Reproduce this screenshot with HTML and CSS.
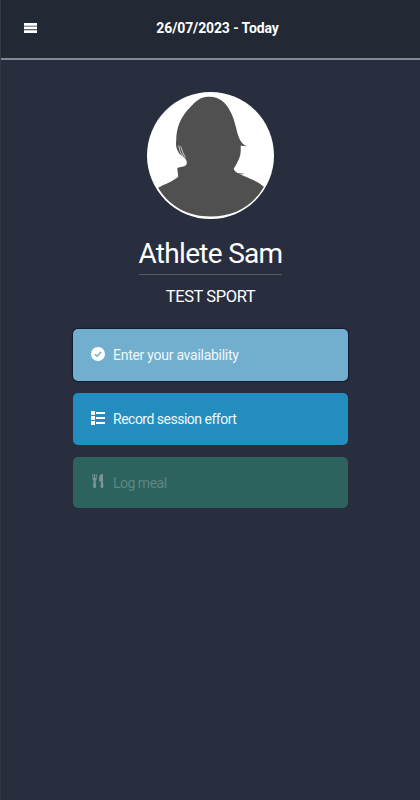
FILE: index.html
```html
<!DOCTYPE html>
<html lang="en">
<head>
  <meta charset="utf-8">
  <meta name="viewport" content="width=device-width, initial-scale=1">
  <title>Athlete Home</title>
  <link rel="stylesheet" href="styles.css">
</head>
<body>
  <header class="top-bar">
    <button class="menu-btn" aria-label="Menu">
      <svg viewBox="0 0 13 10">
        <path d="M0 0H13V2.700H0ZM0 3.500H13V6.300H0ZM0 7.200H13V10H0Z"/>
      </svg>
    </button>
    <div class="date">26/07/2023 - Today</div>
  </header>

  <main class="profile">
    <div class="avatar">
      <svg viewBox="0 0 126 126">
        <path d="M62 4.700C55 4 49 8 43 15C34 24 29 35 29 48C28 54 30 58 32 61L38 66C40 69 40 72 38 73C36 75 31 74 30 76L31 84C25 89 18 91 11 95C22 113 40 123.500 63 123.500C87 123.500 105 113 116 94C111 89 104 87 98 84C92 82 87 80 86 76C90 70 93 64 93 58V53L97 53.500C92 49 90 43 88.500 36C87 30 85.500 24 82 18C78 10 71 4.500 62 4.700Z"/>
        <path d="M91 48Q95 52 99 54L92 52.500ZM84 79Q91 81 97 81L87 83Z"/>
        <path class="hair-gap" d="M31.500 53Q32 60 36 64M33.500 54Q35 60 38 65"/>
      </svg>
    </div>

    <h1>Athlete Sam</h1>
    <h2>TEST SPORT</h2>

    <div class="actions">
      <button class="action availability">
        <svg viewBox="0 0 14 14">
          <circle cx="7" cy="7" r="7"/>
          <path class="tick" d="M3.900 7.200L6 9.200L10.200 4.900"/>
        </svg>
        <span>Enter your availability</span>
      </button>
      <button class="action session">
        <svg viewBox="0 0 14 14">
          <path d="M0 0H4V4H0ZM0 5H4V9H0ZM0 10H4V14H0ZM5 1H14V3H5ZM5 6H14V8H5ZM5 11H14V13H5Z"/>
        </svg>
        <span>Record session effort</span>
      </button>
      <button class="action meal" disabled>
        <svg viewBox="0 0 14 14">
          <path d="M1.500 0H2.300V4H3.100V0H4.100V4H4.900V0H5.700V4.500Q5.700 6 4.600 6.700L5.200 12.500Q5 14 3.600 14Q2.200 14 2 12.500L2.600 6.700Q1.500 6 1.500 4.500ZM12 0V7L12.500 12.500Q12.300 14 11 14Q9.700 14 9.500 12.500L10 7.500H8.200V3Q8.700 0 12 0Z"/>
        </svg>
        <span>Log meal</span>
      </button>
    </div>
  </main>
</body>
</html>
```

FILE: styles.css
```css
* {
  box-sizing: border-box;
}

body {
  margin: 0;
  min-height: 100vh;
  background-color: #292e3f;
  border-left: 1px solid #343948;
  color: #fff;
  font-family: Roboto, "Liberation Sans", sans-serif;
}

.top-bar {
  display: grid;
  grid-template-columns: 60px 1fr 46px;
  align-items: center;
  height: 60px;
  padding-bottom: 3px;
  background-color: #222834;
  border-bottom: 2px solid #858995;
}

.menu-btn {
  width: 13px;
  height: 10px;
  margin-left: 23px;
  padding: 0;
  background: none;
  border: none;
  cursor: pointer;
}

.menu-btn svg {
  display: block;
  width: 13px;
  height: 10px;
  fill: #fff;
}

.date {
  text-align: center;
  font-size: 14px;
  font-weight: bold;
  letter-spacing: -0.12px;
}

.profile {
  display: flex;
  flex-direction: column;
  align-items: center;
  padding-top: 32px;
}

.avatar {
  width: 127px;
  height: 127px;
  background-color: #fff;
  border-radius: 50%;
  overflow: hidden;
}

.avatar svg {
  display: block;
  fill: #505050;
}

.avatar .hair-gap {
  fill: none;
  stroke: #fff;
  stroke-width: 0.7;
}

h1 {
  height: 40px;
  margin: 16px 0 0;
  border-bottom: 1px solid #555a69;
  font-size: 28px;
  font-weight: 400;
  letter-spacing: -0.7px;
  line-height: 38px;
}

h2 {
  margin: 11px 0 0;
  font-size: 16.5px;
  font-weight: 400;
  letter-spacing: -0.4px;
  line-height: 22px;
}

.actions {
  display: flex;
  flex-direction: column;
  gap: 12px;
  width: 275px;
  margin-top: 21px;
}

.action {
  display: flex;
  align-items: center;
  gap: 8px;
  height: 52px;
  padding: 0 18px;
  border: none;
  border-radius: 5px;
  color: #edf8fc;
  font-family: inherit;
  font-size: 14px;
  letter-spacing: -0.5px;
  text-align: left;
  cursor: pointer;
}

.action svg {
  width: 14px;
  height: 14px;
  margin-top: -3px;
  fill: #fff;
}

.availability {
  background-color: #72afce;
  box-shadow: 0 0 1px 1px #111b31;
  letter-spacing: -0.27px;
}

.availability .tick {
  fill: none;
  stroke: #72afce;
  stroke-width: 1.5;
}

.session {
  background-color: #238dbd;
}

.meal {
  height: 51px;
  background-color: #2c635f;
  color: #628583;
  cursor: default;
}

.meal svg {
  fill: #799693;
}
```
